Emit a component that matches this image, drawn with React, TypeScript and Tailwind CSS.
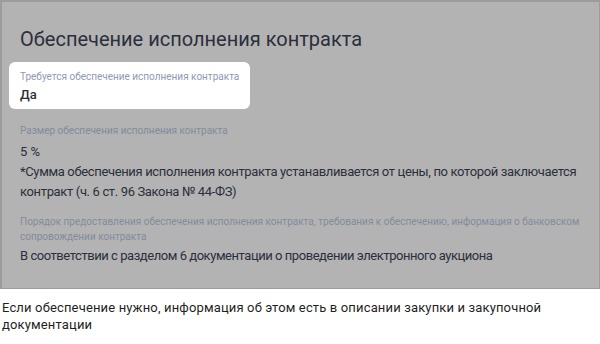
export default function App() {
  return (
    <div className="w-[600px] h-[344px] bg-white overflow-hidden" style={{ fontFamily: "Roboto, 'Noto Sans', sans-serif" }}>
      <div className="h-[289px] bg-[#b3b3b3] border-t-2 border-l-2 border-r border-b border-[#9c9c9c] pl-[18px] pr-[10px] pt-[24px]">
        <div className="text-[20px] leading-[26px] text-[#2b2f3b]">Обеспечение исполнения контракта</div>
        <div className="mt-[10px] -ml-[11px] w-[241px] h-[47px] bg-white rounded-[6px] pl-[11px] pt-[8px]">
          <div className="text-[10px] leading-[13px] text-[#8f9ab5]">Требуется обеспечение исполнения контракта</div>
          <div className="mt-[4px] text-[13px] leading-[16px] font-medium text-[#2b2f3b]">Да</div>
        </div>
        <div className="mt-[15px] text-[10px] leading-[13px] text-[#838b9c]">Размер обеспечения исполнения контракта</div>
        <div className="mt-[5px] text-[13px] leading-[20px] text-[#2b2f3b]">
          <div>5 %</div>
          <div className="tracking-[-0.35px]">*Сумма обеспечения исполнения контракта устанавливается от цены, по которой заключается контракт (ч. 6 ст. 96 Закона № 44-ФЗ)</div>
        </div>
        <div className="mt-[12px] text-[10px] leading-[15px] text-[#838b9c]">Порядок предоставления обеспечения исполнения контракта, требования к обеспечению, информация о банковском сопровождении контракта</div>
        <div className="mt-[2px] text-[13px] leading-[20px] tracking-[-0.45px] text-[#2b2f3b]">В соответствии с разделом 6 документации о проведении электронного аукциона</div>
      </div>
      <div className="pt-[10px] pl-[2px] text-[13px] leading-[17px] tracking-[0.15px] text-[#1f1f1f]">Если обеспечение нужно, информация об этом есть в описании закупки и закупочной документации</div>
    </div>
  );
}
